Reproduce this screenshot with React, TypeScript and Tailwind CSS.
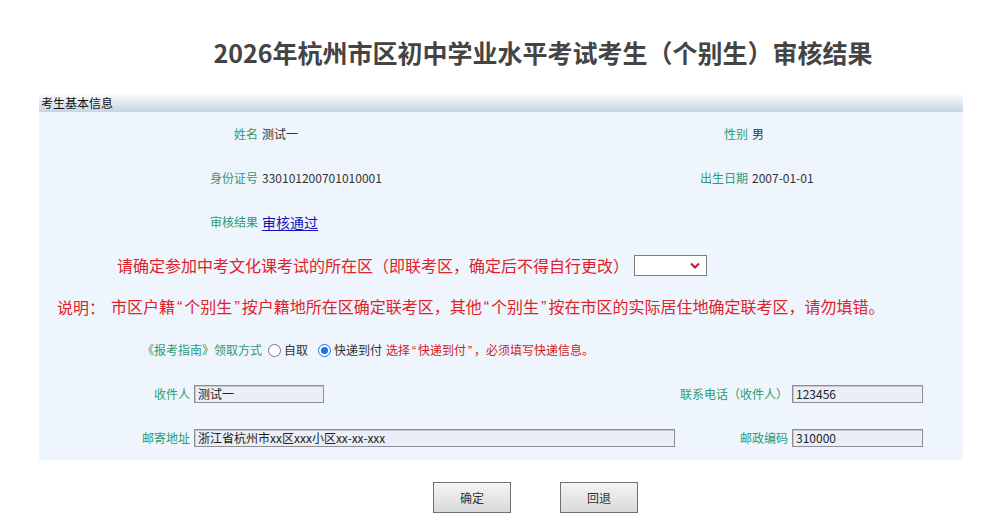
import React from 'react';

const font = { fontFamily: '"Noto Sans CJK SC", "Liberation Sans", sans-serif' };

const Label = ({ children }: { children: React.ReactNode }) => (
  <span className="text-[12px] text-[#2f9a72] text-right pr-[4px] whitespace-nowrap">{children}</span>
);

// narrow western quotes, as the page's font renders them
const Q = ({ c }: { c: string }) => (
  <span className="font-['Liberation_Sans'] px-[2px]">{c}</span>
);

const Field = ({ value, w }: { value: string; w: string }) => (
  <div
    className={`${w} h-[18px] border border-[#8f8f8f] bg-[#e9eef8] text-[12px] leading-[16px] text-[#222] pl-[3px] shadow-[inset_1px_1px_0_#c8c8c8] overflow-hidden whitespace-nowrap`}
  >
    {value}
  </div>
);

const Radio = ({ checked }: { checked?: boolean }) =>
  checked ? (
    <span className="inline-flex w-[13px] h-[13px] rounded-full border border-[#1a73e8] bg-white items-center justify-center">
      <span className="w-[7px] h-[7px] rounded-full bg-[#1a73e8]" />
    </span>
  ) : (
    <span className="inline-block w-[13px] h-[13px] rounded-full border border-[#767676] bg-white" />
  );

export default function App() {
  return (
    <div className="w-[994px] h-[530px] bg-white overflow-hidden" style={font}>
      {/* Title */}
      <div className="pt-[34px] pl-[92px] text-center">
        <h1 className="text-[25px] leading-[36px] font-bold text-[#444]">
          2026年杭州市区初中学业水平考试考生（个别生）审核结果
        </h1>
      </div>

      {/* Panel */}
      <div className="mt-[23px] ml-[39px] w-[924px]">
        <div className="h-[19px] bg-gradient-to-b from-white to-[#c7d4e2] text-[12px] leading-[19px] text-[#111] pl-[2px]">
          考生基本信息
        </div>

        <div className="bg-[#eef5fc] h-[348px]">
          <div className="grid grid-cols-[223px_266px_224px_1fr]">
            <div className="h-[44px] flex items-center justify-end"><Label>姓名</Label></div>
            <div className="h-[44px] flex items-center text-[12px] text-[#333]">测试一</div>
            <div className="h-[44px] flex items-center justify-end"><Label>性别</Label></div>
            <div className="h-[44px] flex items-center text-[12px] text-[#333]">男</div>

            <div className="h-[44px] flex items-center justify-end"><Label>身份证号</Label></div>
            <div className="h-[44px] flex items-center text-[12px] text-[#333]">330101200701010001</div>
            <div className="h-[44px] flex items-center justify-end"><Label>出生日期</Label></div>
            <div className="h-[44px] flex items-center text-[12px] text-[#333]">2007-01-01</div>

            <div className="h-[44px] flex items-center justify-end"><Label>审核结果</Label></div>
            <div className="h-[44px] flex items-center text-[14px] text-[#1414b4] underline underline-offset-2">审核通过</div>
          </div>

          {/* District select */}
          <div className="h-[42px] flex items-center pl-[78px] gap-[5px]">
            <span className="text-[16px] text-[#e0222a]">请确定参加中考文化课考试的所在区（即联考区，确定后不得自行更改）</span>
            <div className="w-[73px] h-[21px] border border-[#7a7a7a] bg-white flex items-center justify-end pr-[6px]">
              <svg width="10" height="7" viewBox="0 0 10 7">
                <path d="M1 1.5 L5 5.5 L9 1.5" fill="none" stroke="#c8102e" strokeWidth="2" />
              </svg>
            </div>
          </div>

          {/* Notice */}
          <div className="h-[42px] flex items-center pl-[18px] text-[16px] text-[#e0222a] whitespace-nowrap">
            <span>说明：</span>
            <span className="ml-[6px]">
              市区户籍<Q c="“" />个别生<Q c="”" />按户籍地所在区确定联考区，其他<Q c="“" />个别生<Q c="”" />按在市区的实际居住地确定联考区，请勿填错。
            </span>
          </div>

          {/* Guide pickup */}
          <div className="h-[44px] flex items-center pl-[103px] text-[12px] whitespace-nowrap">
            <span className="text-[#2f9a72]">《报考指南》领取方式</span>
            <span className="ml-[6px] flex items-center gap-[3px] text-[#333]"><Radio />自取</span>
            <span className="ml-[10px] flex items-center gap-[3px] text-[#333]"><Radio checked />快递到付</span>
            <span className="ml-[4px] text-[#d41a1a]">
              选择<Q c="“" />快递到付<Q c="”" />，必须填写快递信息。
            </span>
          </div>

          {/* Delivery info */}
          <div className="grid grid-cols-[155px_498px_100px_1fr]">
            <div className="h-[44px] flex items-center justify-end"><Label>收件人</Label></div>
            <div className="h-[44px] flex items-center"><Field value="测试一" w="w-[130px]" /></div>
            <div className="h-[44px] flex items-center justify-end"><Label>联系电话（收件人）</Label></div>
            <div className="h-[44px] flex items-center"><Field value="123456" w="w-[131px]" /></div>

            <div className="h-[44px] flex items-center justify-end"><Label>邮寄地址</Label></div>
            <div className="h-[44px] flex items-center"><Field value="浙江省杭州市xx区xxx小区xx-xx-xxx" w="w-[481px]" /></div>
            <div className="h-[44px] flex items-center justify-end"><Label>邮政编码</Label></div>
            <div className="h-[44px] flex items-center"><Field value="310000" w="w-[131px]" /></div>
          </div>
        </div>
      </div>

      {/* Buttons */}
      <div className="mt-[22px] pl-[433px] flex gap-[49px]">
        <button className="w-[78px] h-[31px] border border-[#707070] bg-gradient-to-b from-[#f4f4f4] to-[#dadada] text-[12px] text-[#333]">确定</button>
        <button className="w-[78px] h-[31px] border border-[#707070] bg-gradient-to-b from-[#f4f4f4] to-[#dadada] text-[12px] text-[#333]">回退</button>
      </div>
    </div>
  );
}
